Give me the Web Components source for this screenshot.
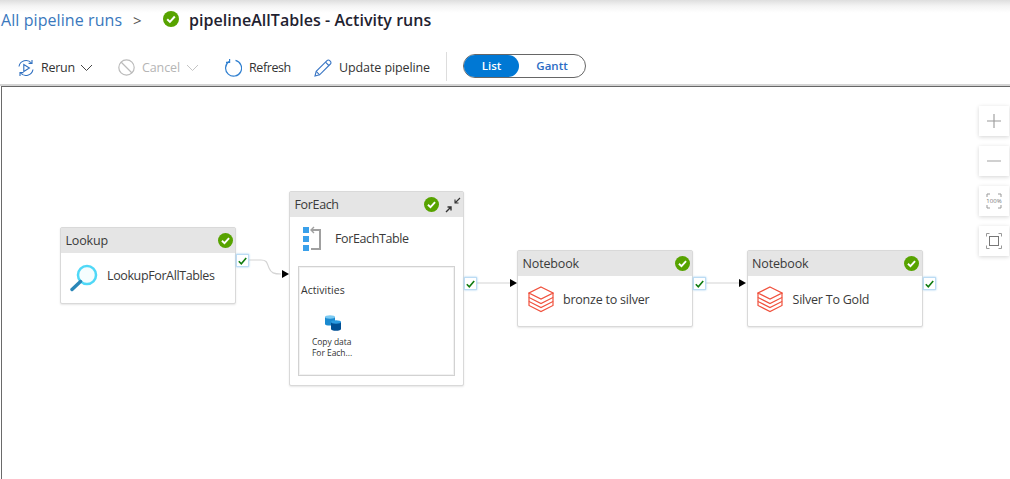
<!DOCTYPE html>
<html><head><meta charset="utf-8">
<style>
html,body{margin:0;height:100%;overflow:hidden;background:#fff}
body{font-family:"Open Sans","Noto Sans",sans-serif;display:flex;flex-direction:column;width:1010px;height:479px}
</style></head><body>
<run-header></run-header>
<run-toolbar></run-toolbar>
<run-canvas></run-canvas>
<script>
const FONT='"Open Sans","Noto Sans",sans-serif';
const def=(n,html)=>customElements.define(n,class extends HTMLElement{
  connectedCallback(){ if(this.shadowRoot)return; const r=this.attachShadow({mode:'open'}); r.innerHTML=typeof html==='function'?html(this):html; }
});
const okIcon=s=>`<svg width="${s}" height="${s}" viewBox="0 0 16 16" style="display:block"><circle cx="8" cy="8" r="8" fill="#57a300"/><path d="M4.2 8.3l2.7 2.6 4.900-5.400" fill="none" stroke="#fff" stroke-width="2"/></svg>`;
def('status-ok',h=>`<style>:host{display:block;flex:none}</style>${okIcon(+h.getAttribute('size')||15)}`);

def('run-header',`<style>
:host{display:flex;align-items:center;height:40px;flex:none;box-sizing:border-box;padding:0 0 0 1px;background:linear-gradient(#dedede 0,#f4f4f4 6px,#fff 13px);font-family:${FONT}}
.link{color:#3a78bd;font-size:16px;letter-spacing:.08px;width:132px}
.sep{color:#555;font-size:15px;width:30px}
.t{font-size:16px;font-weight:600;color:#1f2230;margin-left:10px;letter-spacing:.04px}
status-ok{margin-top:-2px}
</style><span class="link">All pipeline runs</span><span class="sep">&gt;</span><status-ok size="16"></status-ok><span class="t">pipelineAllTables - Activity runs</span>`);

const chev=c=>`<svg width="13" height="8" viewBox="0 0 13 8"><path d="M1 1l5.500 5.500L12 1" fill="none" stroke="${c}" stroke-width="1"/></svg>`;
def('tool-button',h=>{const dis=h.hasAttribute('disabled');return `<style>
:host{display:flex;align-items:center;flex:none;font-family:${FONT};font-size:12.5px;color:${dis?'#b5b5b5':'#333'};gap:6px;letter-spacing:-.1px;margin-top:2px}
</style><slot name="icon"></slot><slot></slot>${h.hasAttribute('menu')?chev(dis?'#c4c4c4':'#444'):''}`});

def('view-toggle',`<style>
:host{display:flex;box-sizing:border-box;width:123px;height:24px;border:1px solid #666;border-radius:12px;font-family:${FONT};font-size:11.5px;font-weight:600;flex:none;margin-bottom:2px}
span{display:flex;align-items:center;justify-content:center}
.on{width:55px;background:#0078d4;color:#fff;border-radius:11px}
.off{flex:1;color:#2b6cc4}
</style><span class="on">List</span><span class="off">Gantt</span>`);

def('run-toolbar',`<style>
:host{display:flex;align-items:center;height:46px;flex:none;box-sizing:border-box;padding:9px 0 0 17px;border-bottom:2px solid #d4d4d4}
.div{width:1px;height:29px;background:#ddd;margin:0 16px}
svg{display:block}
</style>
<tool-button menu style="width:101px;letter-spacing:-.25px;gap:5px"><svg slot="icon" width="18" height="18" viewBox="0 0 18 18" fill="none" stroke="#2f6fc0" stroke-width="1.100" style="margin-right:1px"><path d="M2 7.500A7.200 7.200 0 0 1 14.500 4"/><path d="M15 1v3.400h-3.400"/><path d="M16 10.500A7.200 7.200 0 0 1 3.500 14"/><path d="M3 17v-3.400h3.400"/><path d="M6.800 5.500v7l5.600-3.500z"/></svg>Rerun</tool-button>
<tool-button menu disabled style="width:106px"><svg slot="icon" width="17" height="17" viewBox="0 0 17 17" fill="none" stroke="#bbb" stroke-width="1.200" style="margin-right:1px"><circle cx="8.500" cy="8.500" r="7.700"/><path d="M3 3l11 11"/></svg>Cancel</tool-button>
<tool-button style="width:90px;letter-spacing:-.4px"><svg slot="icon" width="18" height="18" viewBox="0 0 18 18" fill="none" stroke="#2f7fd0" stroke-width="1.200" style="margin-right:1px"><path d="M5 2.600A8 8 0 1 0 11.500 1.400"/><path d="M5.600 0v3.300H2"/></svg>Refresh</tool-button>
<tool-button><svg slot="icon" width="18" height="18" viewBox="0 0 18 18" fill="none" stroke="#3a76c4" stroke-width="1.100" style="margin-right:1px"><path d="M1 17l1.200-4.600L13 1.600a1.900 1.900 0 0 1 2.700 0l.7.7a1.900 1.900 0 0 1 0 2.700L5.600 15.800z"/><path d="M11.500 3.200l3.300 3.300M2.200 12.400l3.400 3.400"/></svg>Update pipeline</tool-button>
<span class="div"></span><view-toggle></view-toggle>`);

def('port-check',`<style>
:host{position:absolute;box-sizing:border-box;width:13px;height:13px;background:#fff;border:1px solid #bcdcf4;box-shadow:0 0 2px #9ccbee;display:flex;align-items:center;justify-content:center}
</style><svg width="9" height="8" viewBox="0 0 9 8"><path d="M.8 4.200l2.500 2.500L8.200 1" fill="none" stroke="#107c10" stroke-width="1.600"/></svg>`);

def('activity-node',h=>`<style>
:host{position:absolute;box-sizing:border-box;background:#fff;border:1px solid #d9d9d9;border-radius:2px;box-shadow:0 1px 2px #0000001a;font-family:${FONT};color:#3a3a3a;display:flex;flex-direction:column}
.head{display:flex;align-items:center;height:25px;flex:none;background:#e5e5e5;padding:0 2.500px 0 4.500px;font-size:12.500px;letter-spacing:var(--hls,-.15px);gap:6px}
.head b{font-weight:400;flex:1}
.row{display:flex;align-items:center;height:var(--rh,50px);flex:none;font-size:12.500px;letter-spacing:var(--ls,-.22px)}
.ic{display:flex;justify-content:center;flex:none;width:var(--iw,45px)}
.lb{padding-bottom:var(--lift,4px)}
</style><div class="head"><b>${h.getAttribute('kind')}</b><status-ok size="15"></status-ok><slot name="head"></slot></div>
<div class="row"><span class="ic"><slot name="icon"></slot></span><span class="lb">${h.getAttribute('label')}</span></div><slot></slot>`);

def('inner-activities',`<style>
:host{display:block;box-sizing:border-box;margin:5px 8px 0 8px;height:110px;border:1px solid #d2d2d2;box-shadow:inset 0 0 0 1px #f2f2f2;padding:16px 0 0 2px;font-family:${FONT};color:#333}
.t{font-size:10.500px;line-height:14px;letter-spacing:.05px}
.i{width:64px;margin-top:18px;display:flex;flex-direction:column;align-items:center}
.l{font-size:8.500px;line-height:11px;margin-top:5px;width:42px;letter-spacing:-.05px}
svg{display:block}
</style><div class="t">Activities</div><div class="i"><svg width="16" height="16" viewBox="0 0 16 16" style="margin-left:-1px"><path d="M0 2v7c0 1 2 1.600 5 1.600s5-.6 5-1.600V2z" fill="#1b8ad0"/><ellipse cx="5" cy="2" rx="5" ry="1.700" fill="#7ccaf2"/><path d="M6 7v7c0 1 2.200 1.800 5 1.800s5-.8 5-1.800V7z" fill="#004f94"/><ellipse cx="11" cy="7" rx="5" ry="1.700" fill="#2a9ae0"/></svg><div class="l">Copy data For Each...</div></div>`);

def('canvas-control',`<style>
:host{display:flex;align-items:center;justify-content:center;width:30px;height:30px;background:#fff;box-shadow:0 1px 4px #0000002b;color:#999}
</style><slot></slot>`);

const lake=`<svg width="26" height="27" viewBox="0 0 26 27" fill="none" stroke="#f0503c" stroke-width="1.200" stroke-linejoin="miter" style="display:block;margin-top:-3px"><path d="M13 1L25 7 13 13 1 7z"/><path d="M1 7v4.500l12 6 12-6V7"/><path d="M1 11.500v4l12 6 12-6v-4"/><path d="M1 15.500v4l12 6 12-6v-4"/></svg>`;

def('run-canvas',`<style>
:host{display:block;position:relative;flex:1;box-sizing:border-box;border-top:1px solid #666;border-left:1px solid #6a6a6a;margin-left:1px;overflow:hidden;background:#fff}
.wires{position:absolute;left:-2px;top:-87px}
.ctr{position:absolute;left:977px;top:19px;display:flex;flex-direction:column;gap:10px}
svg{display:block}
</style>
<svg class="wires" width="1010" height="479" fill="none" stroke="#d4d4d4" stroke-width="1.200">
<path d="M249 260h12c6 0 6 3 8 8 2 5 5 6 12 6"/><path fill="#000" stroke="none" d="M282 270l7 4-7 4z"/>
<path d="M477 283h33"/><path fill="#000" stroke="none" d="M510 279l7 4-7 4z"/>
<path d="M706 283h33"/><path fill="#000" stroke="none" d="M739 279l7 4-7 4z"/>
</svg>
<activity-node kind="Lookup" label="LookupForAllTables" style="left:58px;top:140px;width:176px;height:77px;--ls:-.38px;--lift:6px;--iw:46px">
<svg slot="icon" width="28" height="28" viewBox="0 0 28 28" fill="none" style="display:block"><circle cx="17" cy="11" r="9" stroke="#4fd8f7" stroke-width="2.600"/><circle cx="17" cy="11" r="8" fill="#d8f6fd" opacity=".25"/><path d="M10.500 17.500L2 25.500" stroke="#2a87b8" stroke-width="3.400" stroke-linecap="round"/></svg></activity-node>
<activity-node kind="ForEach" label="ForEachTable" style="left:287px;top:104px;width:175px;height:195px;--rh:44px;--ls:-.38px;--hls:-.35px;--lift:2px">
<svg slot="head" width="16" height="16" viewBox="0 0 16 16" fill="none" stroke="#333" stroke-width="1.100" style="display:block"><path d="M15 1l-5 5M10 2.500V6h3.500"/><path d="M1 15l5-5M6 13.500V10H2.500" stroke-width="1.400"/></svg>
<svg slot="icon" width="20" height="26" viewBox="0 0 20 26" fill="none" style="display:block;margin-left:-2px"><rect x="1" y="1" width="6" height="6" fill="#3aa0ea"/><rect x="1" y="10" width="6" height="6" fill="#3aa0ea"/><rect x="1" y="19" width="6" height="6" fill="#3aa0ea"/><path d="M9 4h9v19H9" stroke="#a0a0a0" stroke-width="2"/><path d="M12 1L9 4l3 3" stroke="#a0a0a0" stroke-width="1.400"/></svg>
<inner-activities></inner-activities></activity-node>
<activity-node kind="Notebook" label="bronze to silver" style="left:515px;top:163px;width:176px;height:77px"><span slot="icon">${lake}</span></activity-node>
<activity-node kind="Notebook" label="Silver To Gold" style="left:744.500px;top:163px;width:176px;height:77px"><span slot="icon">${lake}</span></activity-node>
<port-check style="left:234px;top:167px"></port-check>
<port-check style="left:462px;top:190px"></port-check>
<port-check style="left:691px;top:190px"></port-check>
<port-check style="left:921px;top:190px"></port-check>
<div class="ctr">
<canvas-control><svg width="16" height="16" viewBox="0 0 16 16" stroke="#9a9a9a" stroke-width="1.100"><path d="M8 1v14M1 8h14"/></svg></canvas-control>
<canvas-control><svg width="16" height="16" viewBox="0 0 16 16" stroke="#aaa" stroke-width="1.100"><path d="M1 8h14"/></svg></canvas-control>
<canvas-control><svg width="16" height="16" viewBox="0 0 16 16" fill="none" stroke="#999"><path d="M1 4V1h3M12 1h3v3M1 12v3h3M12 15h3v-3"/><text x="8" y="10" text-anchor="middle" font-size="6" font-family="Open Sans" fill="#777" stroke="none">100%</text></svg></canvas-control>
<canvas-control><svg width="16" height="16" viewBox="0 0 16 16" fill="none" stroke="#999"><path d="M.5 3.500v-3h3M12.500.5h3v3M.5 12.500v3h3M12.500 15.500h3v-3"/><rect x="3.500" y="3.500" width="9" height="9" stroke="#777"/></svg></canvas-control>
</div>`);
</script>
</body></html>
